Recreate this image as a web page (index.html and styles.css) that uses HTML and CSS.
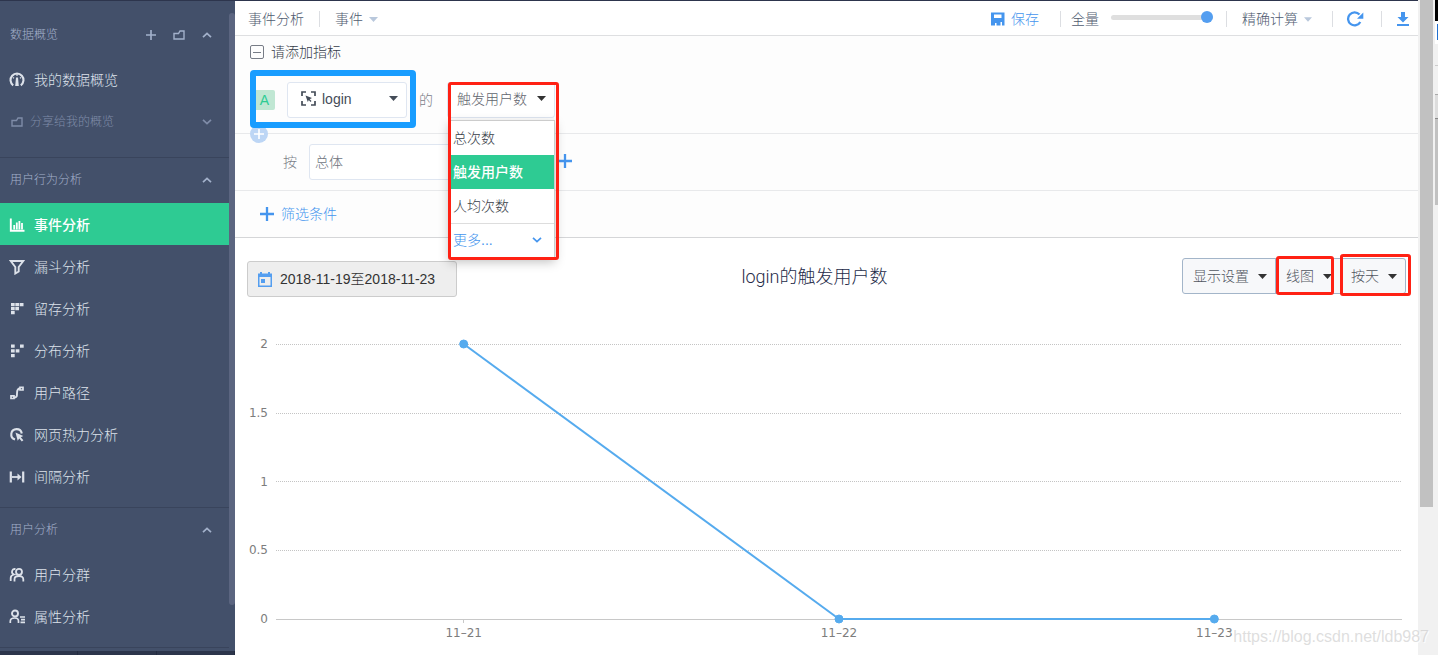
FILE: index.html
```html
<!DOCTYPE html>
<html lang="zh-CN">
<head>
<meta charset="utf-8">
<title>事件分析</title>
<link rel="stylesheet" href="styles.css">
</head>
<body>
<svg width="0" height="0" class="defs" aria-hidden="true">
  <symbol id="caret" viewBox="0 0 9 5"><path d="M0 0h9L4.500 5z" fill="currentColor"/></symbol>
  <symbol id="up" viewBox="0 0 10 6"><path d="M1 5.200 5 1.400 9 5.200" fill="none" stroke="currentColor" stroke-width="1.700"/></symbol>
  <symbol id="down" viewBox="0 0 10 6"><path d="M1 .8 5 4.600 9 .8" fill="none" stroke="currentColor" stroke-width="1.700"/></symbol>
  <symbol id="plus" viewBox="0 0 14 14"><path d="M7 0v14M0 7h14" stroke="currentColor" stroke-width="2.300"/></symbol>
  <symbol id="folder" viewBox="0 0 12 10"><path d="M1 3.500h4.500L7 1h4v8H1z" fill="none" stroke="currentColor" stroke-width="1.400"/></symbol>
</svg>
<div class="app">
  <aside class="sidebar">
    <nav class="menu">
      <section class="group group-first">
        <header class="group-head">
          <h2>数据概览</h2>
          <button class="mini" aria-label="新建"><svg width="10" height="10"><use href="#plus"/></svg></button>
          <button class="mini" aria-label="文件夹"><svg width="12" height="10"><use href="#folder"/></svg></button>
          <button class="mini" aria-label="收起"><svg width="10" height="6"><use href="#up"/></svg></button>
        </header>
        <a class="item" href="#"><svg width="16" height="16" viewBox="0 0 16 16"><path d="M4.200 13.300A6.500 6.500 0 1 1 11.800 13.300" fill="none" stroke="currentColor" stroke-width="2.100"/><path d="M7 5.500h2L9.800 14H6.200z" fill="currentColor"/><path d="M8 2v2M4 5.500l1 .8M12 5.500l-1 .8" stroke="currentColor" stroke-width="1.200"/></svg>我的数据概览</a>
        <a class="item item-shared" href="#"><svg width="12" height="10"><use href="#folder"/></svg><span>分享给我的概览</span><svg width="10" height="6"><use href="#down"/></svg></a>
      </section>
      <section class="group">
        <header class="group-head">
          <h2>用户行为分析</h2>
          <button class="mini" aria-label="收起"><svg width="10" height="6"><use href="#up"/></svg></button>
        </header>
        <a class="item item-active" href="#"><svg width="16" height="16" viewBox="0 0 16 16"><path d="M1.800 1.500V13.800H15.500" fill="none" stroke="currentColor" stroke-width="1.900"/><path d="M5.200 8v4.500M7.800 5.500v7M10.400 4v8.500M13 6v6.500" stroke="currentColor" stroke-width="1.800"/></svg>事件分析</a>
        <a class="item" href="#"><svg width="16" height="16" viewBox="0 0 16 16"><path d="M1.800 2h12.400L9.700 8v4.500L6.300 14.500V8z" fill="none" stroke="currentColor" stroke-width="1.900"/></svg>漏斗分析</a>
        <a class="item" href="#"><svg width="16" height="16" viewBox="0 0 16 16"><path d="M2 2h3.700v3.300H2zM6.300 2H10v3.300H6.300zM10.600 2h3.900v3.300h-3.900zM2 6h3.700v3.300H2zM6.300 6H10v3.300H6.300zM2 10h3.700v3.300H2z" fill="currentColor"/></svg>留存分析</a>
        <a class="item" href="#"><svg width="16" height="16" viewBox="0 0 16 16"><path d="M2 1.500h3.700v3.300H2zM11 1.500h3.700v3.300H11zM2 6.300h3.700v3.300H2zM6.700 6.300h3.700v3.300H6.700zM2 11h3.700v3.300H2z" fill="currentColor"/></svg>分布分析</a>
        <a class="item" href="#"><svg width="16" height="16" viewBox="0 0 16 16"><path d="M4.500 12.500C8 12.500 8 11 8 8.500S8 3.500 11 3.500" fill="none" stroke="currentColor" stroke-width="1.900"/><path d="M2 10.800h3v2.700H2zM11 2.300h3V5h-3z" fill="none" stroke="currentColor" stroke-width="1.700"/></svg>用户路径</a>
        <a class="item" href="#"><svg width="16" height="16" viewBox="0 0 16 16"><path d="M6 12.500A5.300 5.300 0 1 1 12.800 6.500" fill="none" stroke="currentColor" stroke-width="2.100"/><path d="M6.500 5.500 14.300 9l-2.500 1.200 2.600 3-1.600 1.400-2.500-3-1.600 2.200z" fill="currentColor"/></svg>网页热力分析</a>
        <a class="item" href="#"><svg width="16" height="16" viewBox="0 0 16 16"><path d="M1.800 2.500v11M14.200 2.500v11" stroke="currentColor" stroke-width="2.200"/><path d="M3 8h7" stroke="currentColor" stroke-width="1.800"/><path d="M8.500 4.500 12.500 8l-4 3.500z" fill="currentColor"/></svg>间隔分析</a>
      </section>
      <section class="group">
        <header class="group-head">
          <h2>用户分析</h2>
          <button class="mini" aria-label="收起"><svg width="10" height="6"><use href="#up"/></svg></button>
        </header>
        <a class="item" href="#"><svg width="16" height="16" viewBox="0 0 16 16"><circle cx="10" cy="4.800" r="3" fill="none" stroke="currentColor" stroke-width="1.800"/><path d="M5.500 14.500v-2.200c0-2 1.700-3.300 4.500-3.300s4.300 1.300 4.300 3.300v2.200M6.500 2.200C3 1.200 1.500 6 5 7.500 3 8 1.700 9.500 1.700 11v3" fill="none" stroke="currentColor" stroke-width="1.800"/></svg>用户分群</a>
        <a class="item" href="#"><svg width="16" height="16" viewBox="0 0 16 16"><circle cx="6" cy="4.500" r="3" fill="none" stroke="currentColor" stroke-width="1.900"/><path d="M1.300 14v-1.800C1.300 10 3 9 5.800 9s3.700 1 3.700 3.200V14M11 8h5M12 10.700h4M11.500 13.400H16" fill="none" stroke="currentColor" stroke-width="1.700"/></svg>属性分析</a>
      </section>
      <div class="foot"><span></span><span></span><span></span></div>
    </nav>
    <div class="side-scroll"><div class="side-thumb"></div></div>
  </aside>

  <main class="main">
    <header class="topbar">
      <h1>事件分析</h1>
      <span class="sep"></span>
      <label class="pick"><select class="bare" aria-label="类型"><option>事件</option></select><svg width="9" height="5"><use href="#caret"/></svg></label>
      <button class="link save"><svg width="14" height="14" viewBox="0 0 14 14"><path fill-rule="evenodd" d="M0 .5h13.500v13H11V10H9.500v3.500H5.500V11H4v2.500H0zM3 2.500V6h7.500V2.500z" fill="currentColor"/></svg>保存</button>
      <span class="sep sep-save"></span>
      <label class="sample">全量<input type="range" min="0" max="100" value="100"></label>
      <span class="sep"></span>
      <label class="pick"><select class="bare" aria-label="计算方式"><option>精确计算</option></select><svg width="8" height="5"><use href="#caret"/></svg></label>
      <span class="sep sep-tool"></span>
      <button class="link refresh" aria-label="刷新"><svg width="18" height="16" viewBox="0 0 18 16"><path d="M14.300 11A6.500 6.500 0 1 1 13.500 3.600" fill="none" stroke="currentColor" stroke-width="2.300"/><path d="M17.300 1.500v6.300H11z" fill="currentColor"/></svg></button>
      <span class="sep"></span>
      <button class="link" aria-label="下载"><svg width="12" height="14" viewBox="0 0 12 14"><path d="M4 0h4v5h3.500L6 10.500.5 5H4zM0 12h12v2H0z" fill="currentColor"/></svg></button>
    </header>

    <section class="query">
      <div class="query-title"><button class="fold" aria-label="收起"></button>请添加指标</div>
      <div class="metric">
        <div class="event">
          <span class="badge">A</span>
          <label class="box event-box">
            <svg width="15" height="15" viewBox="0 0 15 15"><path d="M1 5V1h4M10 1h4v4M14 10v4h-4M5 14H1v-4" fill="none" stroke="currentColor" stroke-width="1.700"/><path d="M4.500 4.500 11 7 8.700 8.200 10.500 10l-1 1-1.700-2-1 2z" fill="currentColor"/></svg>
            <select class="bare" aria-label="事件"><option>login</option></select>
            <svg width="9" height="5"><use href="#caret"/></svg>
          </label>
          <i class="mark mark-blue"></i>
        </div>
        <span class="of">的</span>
        <div class="measure">
          <button class="box measure-box" aria-expanded="true">触发用户数<svg width="9" height="5"><use href="#caret"/></svg></button>
          <div class="options">
            <button class="option">总次数</button>
            <button class="option option-on">触发用户数</button>
            <button class="option">人均次数</button>
            <button class="option option-more">更多...<svg width="10" height="6"><use href="#down"/></svg></button>
          </div>
          <i class="mark mark-measure"></i>
        </div>
        <button class="add-metric" aria-label="添加指标"><svg width="10" height="10"><use href="#plus"/></svg></button>
      </div>
      <div class="by">
        <label for="dimension">按</label>
        <input id="dimension" class="box dimension" type="text" value="总体">
        <button class="link" aria-label="添加维度"><svg width="14" height="14"><use href="#plus"/></svg></button>
      </div>
      <div class="filter"><button class="link"><svg width="14" height="14"><use href="#plus"/></svg>筛选条件</button></div>
    </section>

    <section class="report">
      <header class="report-head">
        <button class="date"><svg width="14" height="15" viewBox="0 0 14 15"><path fill-rule="evenodd" d="M2 0h2v1.500h6V0h2v1.500h2V15H0V1.500h2zM1.500 5v8.500h11V5z" fill="currentColor"/><path d="M3 7h4v4H3z" fill="currentColor"/></svg>2018-11-19至2018-11-23</button>
        <h2 class="report-title">login的触发用户数</h2>
        <div class="view">
          <button class="seg">显示设置<svg width="9" height="5"><use href="#caret"/></svg></button>
          <label class="seg"><select class="bare" aria-label="图表类型"><option>线图</option></select><svg width="9" height="5"><use href="#caret"/></svg><i class="mark mark-type"></i></label>
          <label class="seg"><select class="bare" aria-label="时间粒度"><option>按天</option></select><svg width="9" height="5"><use href="#caret"/></svg><i class="mark mark-unit"></i></label>
        </div>
      </header>
      <svg class="chart" role="img" aria-label="login的触发用户数">
        <g class="grid"><line x1="0" x2="100%" y1="1" y2="1"/><line x1="0" x2="100%" y1="70" y2="70"/><line x1="0" x2="100%" y1="138" y2="138"/><line x1="0" x2="100%" y1="207" y2="207"/></g>
        <g class="axis"><line x1="0" x2="100%" y1="276" y2="276"/><line x1="16.667%" x2="16.667%" y1="276" y2="280"/><line x1="50%" x2="50%" y1="276" y2="280"/><line x1="83.333%" x2="83.333%" y1="276" y2="280"/></g>
        <g class="ylabels"><text x="-8" y="5">2</text><text x="-8" y="74">1.5</text><text x="-8" y="143">1</text><text x="-8" y="211">0.5</text><text x="-8" y="280">0</text></g>
        <g class="xlabels"><text x="16.667%" y="294">11–21</text><text x="50%" y="294">11–22</text><text x="83.333%" y="294">11–23</text></g>
        <g class="series"><line x1="16.667%" y1="1" x2="50%" y2="276"/><line x1="50%" y1="276" x2="83.333%" y2="276"/><circle cx="16.667%" cy="1" r="4"/><circle cx="50%" cy="276" r="4"/><circle cx="83.333%" cy="276" r="4"/></g>
      </svg>
    </section>
  </main>
  <div class="scroll"><div class="thumb"></div></div>
  <div class="edge"></div>
  <span class="watermark">https://blog.csdn.net/ldb987</span>
</div>
</body>
</html>
```
FILE: styles.css
```css
* { box-sizing: border-box; }
body {
  margin: 0;
  font: 300 14px/20px "Liberation Sans", "Noto Sans CJK SC", sans-serif;
  color: #475166;
}
button, input, select { font: inherit; color: inherit; }
button { border: 0; padding: 0; background: none; text-align: left; cursor: pointer; }
h1, h2 { margin: 0; font: inherit; }
a { color: inherit; text-decoration: none; }
svg { flex: none; }
.defs { position: absolute; }
.app { position: relative; display: flex; min-height: 100vh; overflow: hidden; }

/* Sidebar */
.sidebar { display: flex; flex: none; width: 235px; background: #43506a; color: #dde2ea; border-top: 1px solid #2d354d; }
.menu { flex: 1; display: flex; flex-direction: column; }
.group { padding-bottom: 10px; border-bottom: 1px solid #39445c; }
.group-first { padding: 12px 0 15px; }
.group-head { display: flex; align-items: center; gap: 17px; height: 45px; padding: 0 17px 2px 10px; color: #a3b1cb; font-size: 12px; }
.group-head h2 { flex: 1; }
.mini { display: flex; }
.item { display: flex; align-items: center; gap: 8px; height: 42px; padding: 2px 17px 0 9px; }
.item svg { margin-right: 1px; }
.item-active { background: #2ecb93; color: #fff; font-weight: 500; }
.item-shared { padding-left: 11px; gap: 6px; font-size: 12px; color: #7f8ca8; }
.item-shared span { flex: 1; }
.item-shared svg:last-child { margin-right: 0; }
.foot { display: flex; height: 4px; margin-top: auto; margin-right: -6px; background: #2c354b; }
.foot span { flex: 1; border-right: 1px solid #232b40; }
.side-scroll { width: 6px; padding-top: 12px; }
.side-thumb { height: 592px; border-radius: 3px; background: #5b6580; }

/* Top bar */
.main { flex: 1; min-width: 0; background: #fff; }
.topbar { display: flex; align-items: center; gap: 15px; height: 36px; padding: 2px 9px 0 13px; border-top: 1px solid #2d354d; border-bottom: 1px solid #dedfe1; color: #4f5b70; }
.sep { width: 1px; height: 16px; background: #dcdee2; }
.sep-save { margin-left: 6px; margin-right: -5px; }
.sep-tool { margin-left: 5px; }
.bare { appearance: none; flex: 1; min-width: 0; padding: 0; border: 0; background: none; outline: 0; }
.pick { display: flex; align-items: center; gap: 6px; }
.pick svg { color: #b9c8dc; }
.link { display: flex; align-items: center; gap: 6px; color: #4595ee; }
.refresh { margin: 0 2px 0 -2px; }
.save { margin-left: auto; }
.sample { display: flex; align-items: center; gap: 12px; margin-right: -2px; }
.sample input { appearance: none; width: 102px; height: 12px; margin: -4px 0 0; background: none; }
.sample input::-webkit-slider-runnable-track { height: 5px; border-radius: 3px; background: #dfdfdf; }
.sample input::-webkit-slider-thumb { appearance: none; width: 12px; height: 12px; margin-top: -4px; border-radius: 50%; background: #549ef0; }

/* Query builder */
.query { background: #fdfdfd; border-bottom: 1px solid #d5d6d8; }
.query-title { display: flex; align-items: center; gap: 7px; height: 32px; padding-left: 15px; color: #343b48; }
.fold { width: 14px; height: 14px; border: 1px solid #777c86; border-radius: 2px; background: linear-gradient(#777c86, #777c86) center / 8px 1px no-repeat; }
.metric { position: relative; display: flex; align-items: center; height: 66px; padding: 0 0 2px 19px; border-bottom: 1px solid #e8e9eb; }
.event { position: relative; display: flex; align-items: center; gap: 12px; }
.badge { width: 21px; height: 20px; border-radius: 2px; background: #c0e7d3; color: #2ecb93; text-align: center; }
.box { display: flex; align-items: center; height: 36px; padding-bottom: 2px; border: 1px solid #dfe6f1; border-radius: 3px; background: #fff; }
.event-box { width: 120px; gap: 6px; padding-left: 13px; padding-right: 8px; color: #444c58; }
.of { width: 40px; padding-left: 12px; color: #7b8088; }
.measure { position: relative; width: 108px; }
.measure-box { width: 100%; justify-content: space-between; padding-left: 9px; padding-right: 8px; color: #5f656e; }
.measure-box svg { color: #333; }
.options { position: absolute; z-index: 2; top: 38px; left: 2px; right: 0; border: 1px solid #ccc; background: #fff; box-shadow: 0 4px 10px rgba(0, 0, 0, .25); }
.option { display: flex; align-items: center; width: 100%; height: 34px; padding: 0 12px 0 3px; color: #383e48; }
.option-on { background: #2ecb93; color: #fff; font-weight: 500; }
.option-more { justify-content: space-between; border-top: 1px solid #ddd; color: #4595ee; }
.mark { position: absolute; z-index: 3; border: 3px solid #ff2114; border-radius: 3px; pointer-events: none; }
.mark-blue { top: -12px; right: -9px; bottom: -10px; left: -4px; border: 6px solid #199dff; border-radius: 4px; }
.mark-measure { top: 0; left: 1px; right: -4px; height: 178px; }
.add-metric { position: absolute; left: 15px; bottom: -10px; display: flex; align-items: center; justify-content: center; width: 18px; height: 18px; border-radius: 50%; background: #bdd6f5; color: #fff; }
.by { display: flex; align-items: center; height: 57px; padding-left: 48px; border-bottom: 1px solid #e8e9eb; color: #7b8088; }
.by .link { padding-bottom: 3px; }
.dimension { width: 240px; margin: 0 9px 0 12px; padding: 0 5px 3px; outline: 0; color: #6e747d; }
.filter { display: flex; align-items: center; height: 46px; padding-left: 25px; }
.filter .link { gap: 7px; }

/* Report */
.report { padding: 20px 12px 20px; }
.report-head { display: flex; align-items: flex-start; }
.date { display: flex; align-items: center; gap: 8px; width: 210px; height: 36px; margin-top: 3px; padding-left: 10px; border: 1px solid #ccc; border-radius: 3px; background: #eee; color: #333; }
.date svg { color: #549ef0; }
.report-title { flex: 1; padding: 6px 10px 0 0; text-align: center; font: 300 18px/26px Roboto, "Noto Sans CJK SC", sans-serif; color: #252b48; }
.view { display: flex; height: 36px; border: 1px solid #a3b5c9; border-radius: 3px; background: #f7f8fa; color: #50565f; }
.seg { position: relative; display: flex; align-items: center; gap: 9px; padding: 0 8px 0 10px; }
.seg + .seg { border-left: 1px solid #a3b5c9; }
.seg svg { color: #333; }
.mark-type { top: -3px; left: 0; width: 58px; height: 39px; }
.mark-unit { top: -5px; left: -1px; right: -6px; height: 42px; }
.chart { display: block; width: calc(100% - 33px); height: 284px; margin: 46px 4px 0 29px; overflow: visible; }
.chart text { font: 12px "DejaVu Sans", sans-serif; fill: #7d7d7d; }
.ylabels { text-anchor: end; }
.xlabels { text-anchor: middle; }
.grid line { stroke: #c4c4c4; stroke-dasharray: 1 1; shape-rendering: crispEdges; }
.axis line { stroke: #c8c8c8; shape-rendering: crispEdges; }
.series line { stroke: #56abee; stroke-width: 2; }
.series circle { fill: #56abee; stroke: #56abee; }

/* Window scrollbar */
.scroll { flex: none; width: 17px; padding: 0 2px; background: #f1f1f1; }
.thumb { height: 507px; background: #c1c1c1; }
.edge {
  flex: none;
  width: 3px;
  background:
    linear-gradient(#1f6fd0, #1f6fd0) right 24px / 1px 16px no-repeat,
    linear-gradient(#000 21px, #fff 21px 44px, #f1f1f1 44px 65px, #ccc 65px 66px, #f1f1f1 66px 94px, #aaa 94px 95px, #ddd 95px 118px, #888 118px 119px, #c1c1c1 119px 205px, #f1f1f1 205px);
}
.watermark { position: absolute; right: 9px; bottom: 8px; font-size: 16px; color: rgba(200, 200, 200, .6); text-shadow: 1px 1px 1px #fff; pointer-events: none; }
```
